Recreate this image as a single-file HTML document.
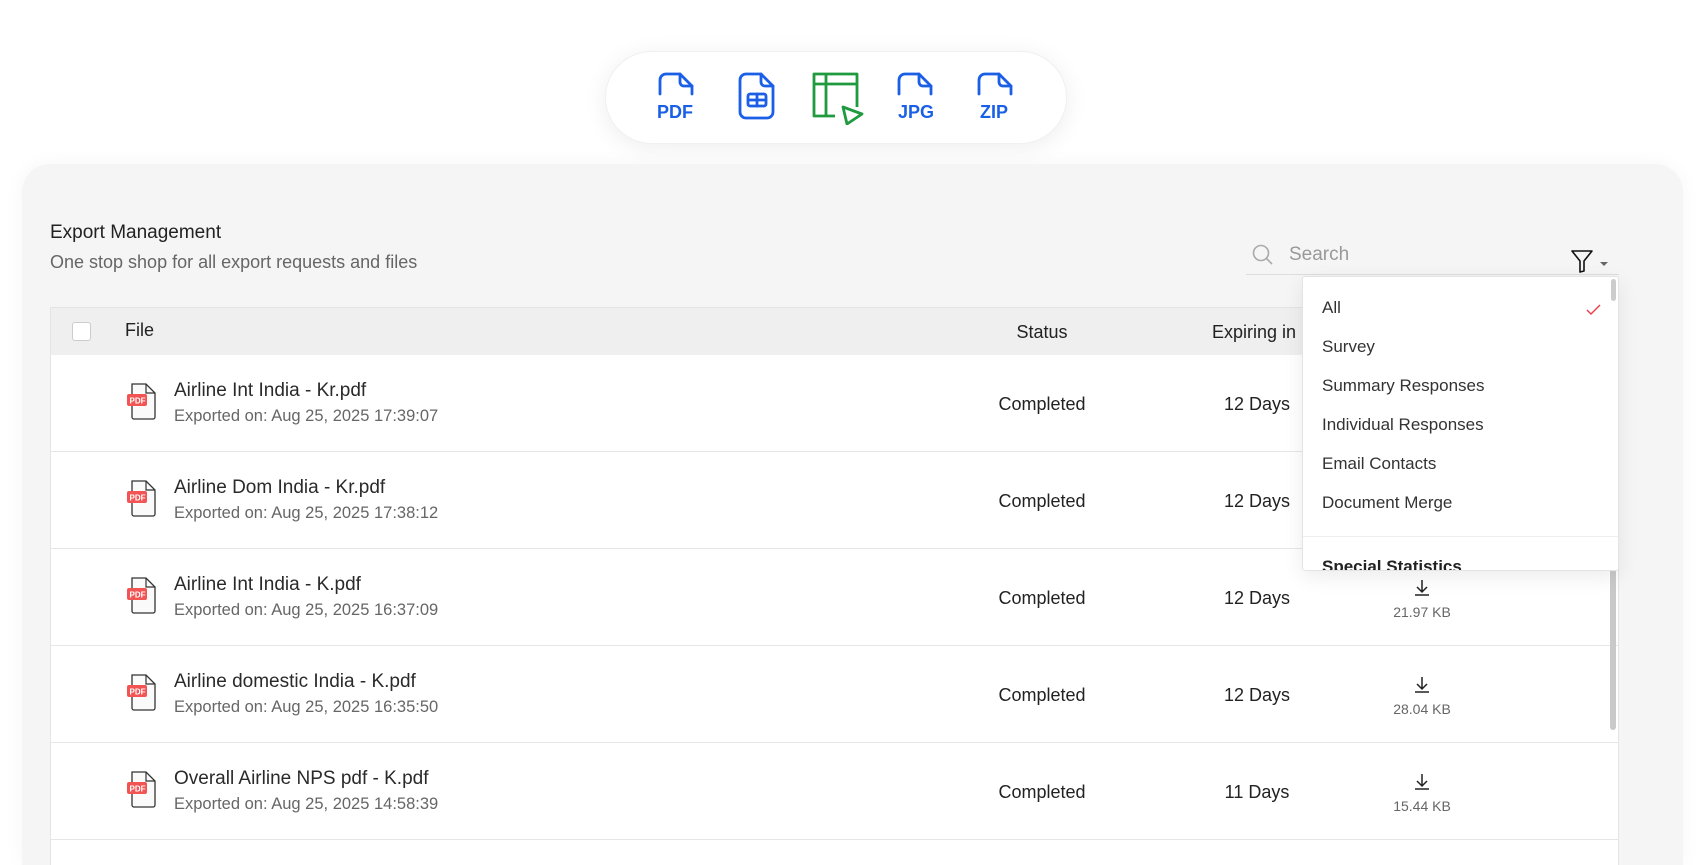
<!DOCTYPE html>
<html><head><meta charset="utf-8"><style>
*{box-sizing:border-box;margin:0;padding:0}
html,body{width:1701px;height:865px;overflow:hidden}
body{background:#fff;font-family:"Liberation Sans",sans-serif;color:#222;position:relative}
.abs{position:absolute}
.pill{left:605px;top:51px;width:462px;height:93px;border-radius:47px;background:#fff;box-shadow:0 4px 24px rgba(0,0,0,.07);border:1px solid #f0f0f0}
.panel{left:22px;top:164px;width:1661px;height:701px;background:#f5f5f5;border-radius:28px 28px 0 0;box-shadow:0 0 20px rgba(0,0,0,.04)}
.t{position:absolute;white-space:nowrap}
.table{left:50px;top:307px;width:1569px;height:558px;background:#fff;border:1px solid #e4e4e4;border-bottom:none}
.hdr{left:51px;top:308px;width:1567px;height:47px;background:#efefef}
.row{position:absolute;left:51px;width:1567px;height:97px;border-bottom:1px solid #e6e6e6}
.name{left:174px;font-size:19px;color:#2a2a2a}
.sub{left:174px;font-size:16.5px;color:#666}
.c{position:absolute;transform:translateX(-50%);font-size:18px;color:#222}
.dd{left:1302px;top:276px;width:317px;height:295px;background:#fff;border:1px solid #e4e4e4;border-radius:3px;box-shadow:0 6px 20px rgba(0,0,0,.08);overflow:hidden}
.it{position:absolute;left:19px;font-size:17px;color:#333}
</style></head><body>
<div class="abs pill"></div>
<svg class="abs" style="left:650px;top:70px" width="380" height="55" viewBox="0 0 380 55">
<g fill="none" stroke="#1a5fe6" stroke-width="2.8" stroke-linejoin="round" stroke-linecap="round">
<path d="M10 24 V10 a6 6 0 0 1 6-6 h14 l12 12 v8"/><path d="M30 4 v8 a4 4 0 0 0 4 4 h8"/>
<path d="M98 48 h-2 a6 6 0 0 1-6-6 V10 a6 6 0 0 1 6-6 h15 l12 12 v26 a6 6 0 0 1-6 6 z"/><path d="M111 4 v8 a4 4 0 0 0 4 4 h8"/>
<rect x="98" y="24" width="18" height="12" rx="2"/><path d="M98 30 h18 M107 24 v12"/>
<path d="M249 24 V10 a6 6 0 0 1 6-6 h14 l12 12 v8"/><path d="M269 4 v8 a4 4 0 0 0 4 4 h8"/>
<path d="M329 24 V10 a6 6 0 0 1 6-6 h14 l12 12 v8"/><path d="M349 4 v8 a4 4 0 0 0 4 4 h8"/>
</g>
<g fill="none" stroke="#1f9a3f" stroke-width="2.8" stroke-linejoin="round">
<path d="M185 46 h-21 V4 h43 v33"/><path d="M164 14 h43 M176 4 v42"/><path d="M193 37 l19 7 l-15 10 z"/>
</g>
<g fill="#1a5fe6" font-family="Liberation Sans" font-weight="bold" font-size="18">
<text x="7" y="48">PDF</text><text x="248" y="48">JPG</text><text x="330" y="48">ZIP</text></g>
</svg>
<div class="abs panel"></div>
<div class="t" style="left:50px;top:222px;font-size:19px;color:#222">Export Management</div>
<div class="t" style="left:50px;top:252px;font-size:18px;color:#666">One stop shop for all export requests and files</div>
<div class="abs" style="left:1246px;top:274px;width:373px;height:1px;background:#ddd"></div>
<svg class="abs" style="left:1252px;top:244px" width="22" height="22"><circle cx="9" cy="9" r="7.5" fill="none" stroke="#aaa" stroke-width="1.6"/><path d="M14.5 14.5 L20 20" stroke="#aaa" stroke-width="1.6"/></svg>
<div class="t" style="left:1289px;top:244px;font-size:19px;color:#999">Search</div>
<svg class="abs" style="left:1569px;top:249px" width="42" height="25"><path d="M3 2 h20 l-8 10 v10 l-4 1 v-11 z" fill="none" stroke="#111" stroke-width="1.6" stroke-linejoin="round"/><path d="M31 13 h8 l-4 4 z" fill="#666"/></svg>
<div class="abs table"></div>
<div class="abs hdr"></div>
<div class="abs" style="left:72px;top:322px;width:19px;height:19px;border:1px solid #ccc;border-radius:3px;background:#fff"></div>
<div class="t" style="left:125px;top:320px;font-size:18px">File</div>
<div class="c" style="left:1042px;top:322px">Status</div>
<div class="t" style="left:1212px;top:322px;font-size:18px">Expiring in</div>

<div class="row" style="top:355px"></div><div class="row" style="top:452px"></div><div class="row" style="top:549px"></div><div class="row" style="top:646px"></div><div class="row" style="top:743px"></div>

<div class="abs" style="left:1610px;top:560px;width:6px;height:170px;background:#c9c9c9;border-radius:3px"></div>

<div class="t name" style="top:380px">Airline Int India - Kr.pdf</div><div class="t sub" style="top:407px">Exported on: Aug 25, 2025 17:39:07</div>
<div class="t name" style="top:477px">Airline Dom India - Kr.pdf</div><div class="t sub" style="top:504px">Exported on: Aug 25, 2025 17:38:12</div>
<div class="t name" style="top:574px">Airline Int India - K.pdf</div><div class="t sub" style="top:601px">Exported on: Aug 25, 2025 16:37:09</div>
<div class="t name" style="top:671px">Airline domestic India - K.pdf</div><div class="t sub" style="top:698px">Exported on: Aug 25, 2025 16:35:50</div>
<div class="t name" style="top:768px">Overall Airline NPS pdf - K.pdf</div><div class="t sub" style="top:795px">Exported on: Aug 25, 2025 14:58:39</div>

<svg class="abs" style="left:122px;top:381px" width="45" height="484" viewBox="0 0 45 484">
<defs><g id="pi"><path d="M10 3 h14 l9 9 v24 a2 2 0 0 1-2 2 h-19 a2 2 0 0 1-2-2 z" fill="#fafafa" stroke="#333" stroke-width="1.3"/><path d="M24 3 v9 h9" fill="none" stroke="#333" stroke-width="1.2"/><rect x="5" y="13" width="20" height="12" rx="2" fill="#f25454"/><text x="7.5" y="22.5" font-size="8" font-weight="bold" fill="#fff" font-family="Liberation Sans">PDF</text></g></defs>
<use href="#pi" y="0"/><use href="#pi" y="97"/><use href="#pi" y="194"/><use href="#pi" y="291"/><use href="#pi" y="388"/><use href="#pi" y="485" opacity="0.5"/>
</svg>

<div class="c" style="left:1042px;top:394px">Completed</div><div class="c" style="left:1257px;top:394px">12 Days</div>
<div class="c" style="left:1042px;top:491px">Completed</div><div class="c" style="left:1257px;top:491px">12 Days</div>
<div class="c" style="left:1042px;top:588px">Completed</div><div class="c" style="left:1257px;top:588px">12 Days</div>
<div class="c" style="left:1042px;top:685px">Completed</div><div class="c" style="left:1257px;top:685px">12 Days</div>
<div class="c" style="left:1042px;top:782px">Completed</div><div class="c" style="left:1257px;top:782px">11 Days</div>

<svg class="abs" style="left:1413px;top:578px" width="18" height="220"><g stroke="#222" stroke-width="1.5" fill="none"><path d="M9 2 v12 M4 9 l5 5 l5-5 M2 17 h14"/><path d="M9 99 v12 M4 106 l5 5 l5-5 M2 114 h14"/><path d="M9 196 v12 M4 203 l5 5 l5-5 M2 211 h14"/></g></svg>
<div class="c" style="left:1422px;top:604px;font-size:14px;color:#666">21.97 KB</div>
<div class="c" style="left:1422px;top:701px;font-size:14px;color:#666">28.04 KB</div>
<div class="c" style="left:1422px;top:798px;font-size:14px;color:#666">15.44 KB</div>

<div class="abs dd">
<div class="it" style="top:21px">All</div>
<svg class="abs" style="left:283px;top:27px" width="16" height="12"><path d="M1 6 l4 4 l9-9" fill="none" stroke="#e8434b" stroke-width="1.5"/></svg>
<div class="it" style="top:60px">Survey</div>
<div class="it" style="top:99px">Summary Responses</div>
<div class="it" style="top:138px">Individual Responses</div>
<div class="it" style="top:177px">Email Contacts</div>
<div class="it" style="top:216px">Document Merge</div>
<div class="abs" style="left:0;top:259px;width:317px;height:1px;background:#eee"></div>
<div class="it" style="top:280px;font-weight:bold;color:#222">Special Statistics</div>
<div class="abs" style="left:308px;top:2px;width:5px;height:22px;border-radius:3px;background:#ccc"></div>
</div>
</body></html>
